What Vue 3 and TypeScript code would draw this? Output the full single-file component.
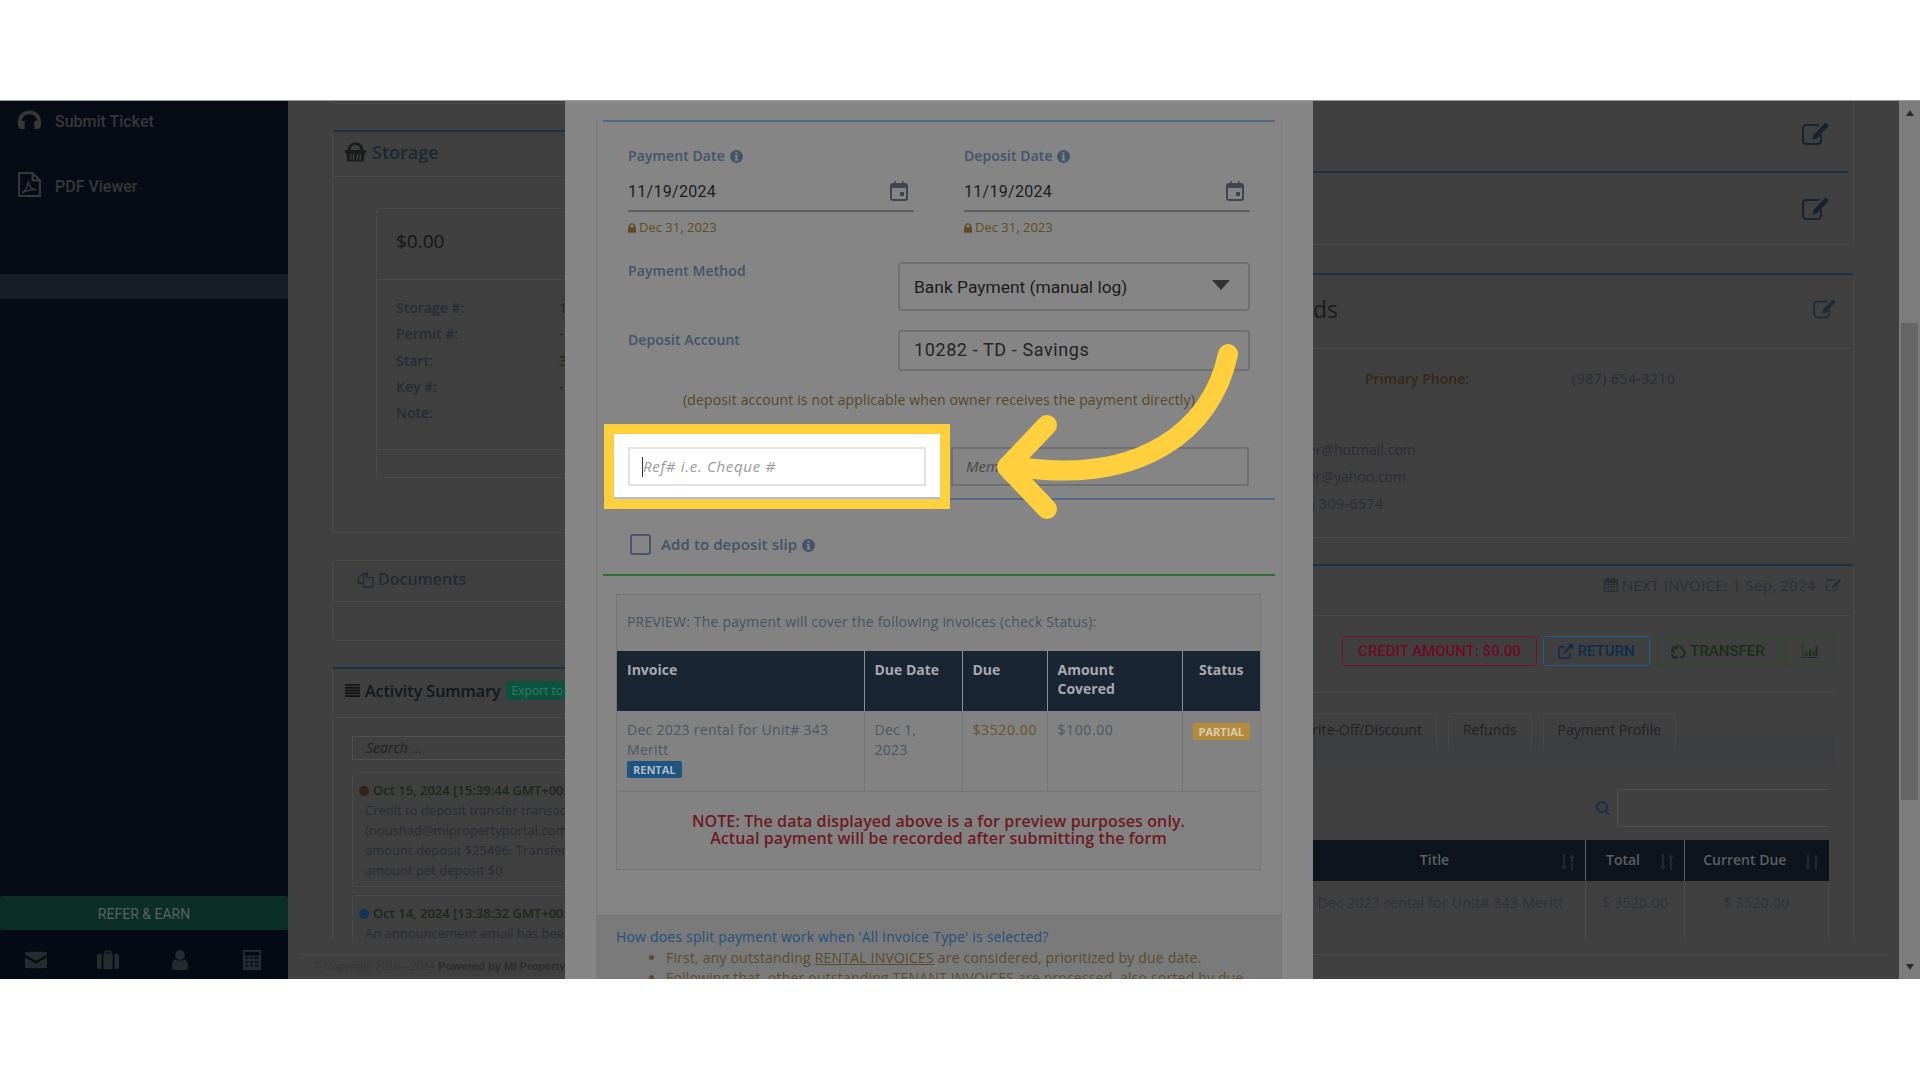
<script setup lang="ts">
interface StorageRow {
  label: string
  value: string
}

interface ActivityEntry {
  date: string
  dot: string
  lines: string[]
}

const storageRows: StorageRow[] = [
  { label: 'Storage #:', value: '1' },
  { label: 'Permit #:', value: '-' },
  { label: 'Start:', value: '3' },
  { label: 'Key #:', value: '-' },
  { label: 'Note:', value: '' },
]

const activity: ActivityEntry[] = [
  {
    date: 'Oct 15, 2024 [15:39:44 GMT+00:00]',
    dot: '#332513',
    lines: [
      'Credit to deposit transfer transaction by',
      '(noushad@mipropertyportal.com). Previous',
      'amount deposit $25496. Transfer amount',
      'amount pet deposit $0',
    ],
  },
  {
    date: 'Oct 14, 2024 [13:38:32 GMT+00:00]',
    dot: '#123458',
    lines: ['An announcement email has been sent to'],
  },
]

const footIcons = ['i-mail', 'i-bag', 'i-user', 'i-calc']
const tableCols = [
  { title: 'Title', cls: 'col-title' },
  { title: 'Total', cls: 'col-total' },
  { title: 'Current Due', cls: 'col-due' },
]
</script>

<template>
  <div class="page">
    <svg class="defs" width="0" height="0" aria-hidden="true">
      <symbol id="i-edit" viewBox="0 0 28 24">
        <path d="M19 13v5.500a3.500 3.500 0 0 1-3.500 3.500h-11A3.500 3.500 0 0 1 1 18.500v-12A3.500 3.500 0 0 1 4.500 3H17" fill="none" stroke="currentColor" stroke-width="2" />
        <path d="M23.500 0.500l3.500 3.200L15 16.500l-4.500 1.200 1-4.700z" fill="currentColor" />
      </symbol>
      <symbol id="i-info" viewBox="0 0 14 14">
        <path fill-rule="evenodd" d="M7 0a7 7 0 1 1 0 14A7 7 0 0 1 7 0zM5.800 2.300v2h2.400v-2zM5 5.500v1.300h.9v3.400H5v1.300h4v-1.300h-.9V5.500z" fill="currentColor" />
      </symbol>
      <symbol id="i-cal" viewBox="0 0 18 20">
        <path fill-rule="evenodd" d="M3 2h1.500V0H6v2h6V0h1.500v2H15a3 3 0 0 1 3 3v12a3 3 0 0 1-3 3H3a3 3 0 0 1-3-3V5a3 3 0 0 1 3-3zM2 7v10a1 1 0 0 0 1 1h12a1 1 0 0 0 1-1V7zm8 4h4v4h-4z" fill="currentColor" />
      </symbol>
      <symbol id="i-lock" viewBox="0 0 10 12">
        <path d="M1 5V3.500a4 3.500 0 0 1 8 0V5h1v7H0V5zm2 0h4V3.500a2 1.800 0 0 0-4 0z" fill="currentColor" fill-rule="evenodd" />
      </symbol>
      <symbol id="i-mail" viewBox="0 0 24 18">
        <path d="M2 0h20a2 2 0 0 1 2 2v1l-12 7L0 3V2a2 2 0 0 1 2-2zM0 6l12 7 12-7v10a2 2 0 0 1-2 2H2a2 2 0 0 1-2-2z" fill="currentColor" />
      </symbol>
      <symbol id="i-bag" viewBox="0 0 24 20">
        <path d="M8 3V1.500A1.500 1.500 0 0 1 9.500 0h5A1.500 1.500 0 0 1 16 1.500V3h1v17H7V3zm1.500 0h5V1.500h-5zM5 3.200V20H3a3 3 0 0 1-3-3V6a3 3 0 0 1 3-2.800zm14 0h2a3 3 0 0 1 3 2.800v11a3 3 0 0 1-3 3h-2z" fill="currentColor" fill-rule="evenodd" />
      </symbol>
      <symbol id="i-user" viewBox="0 0 16 20">
        <path d="M8 0a4.800 4.800 0 1 1 0 10A4.800 4.800 0 0 1 8 0zM3.500 9.500C5 11 11 11 12.500 9.500 15 10 16 12.500 16 15.500V17a3 3 0 0 1-3 3H3a3 3 0 0 1-3-3v-1.500C0 12.500 1 10 3.500 9.500z" fill="currentColor" />
      </symbol>
      <symbol id="i-calc" viewBox="0 0 20 22">
        <path fill-rule="evenodd" d="M1 0h18a1 1 0 0 1 1 1v20a1 1 0 0 1-1 1H1a1 1 0 0 1-1-1V1a1 1 0 0 1 1-1zm1 2v4h16V2zm1 6v2h3V8zm5 0v2h3V8zm5 0v2h4V8zM3 12v2h3v-2zm5 0v2h3v-2zm5 0v2h4v-2zM3 16v2h3v-2zm5 0v2h3v-2zm5 0v2h4v-2z" fill="currentColor" />
      </symbol>
      <symbol id="i-sort" viewBox="0 0 14 16">
        <path d="M3 16L0 12h2V0h2v12h2zM11 0l3 4h-2v12h-2V4H8z" fill="currentColor" />
      </symbol>
    </svg>

    <div class="frame">
      <aside class="sidebar">
        <div class="nav-item">
          <svg class="nav-icon" viewBox="0 0 24 20">
            <path d="M12 0C5.400 0 0 4.800 0 11v4c0 2 1.500 4.500 3.500 4.500H7V11H4c0-4 3.500-7 8-7s8 3 8 7h-3v8.500h3.500c2 0 3.500-2.500 3.500-4.500v-4C24 4.800 18.600 0 12 0z" fill="currentColor" />
          </svg>
          <span>Submit Ticket</span>
        </div>
        <div class="nav-item">
          <svg class="nav-icon pdf" viewBox="0 0 22 24">
            <path d="M1 1h13l7 7v15H1zM14 1v7h7" fill="none" stroke="currentColor" stroke-width="2" />
            <path d="M4 20c3-2 5-6 6-11 0 4 2 7 8 8-5-.5-9 .5-14 3z" fill="none" stroke="currentColor" stroke-width="1.400" />
          </svg>
          <span>PDF Viewer</span>
        </div>
        <div class="nav-active"></div>
        <div class="refer">REFER &amp; EARN</div>
        <div class="foot-icons">
          <svg v-for="icon in footIcons" :key="icon" :class="icon" class="foot-icon"><use :href="`#${icon}`" /></svg>
        </div>
      </aside>

      <main class="main">
        <div class="content">
          <div class="col">
            <div class="stub"></div>

            <section class="card card-storage">
              <header class="card-head">
                <svg class="title-icon" viewBox="0 0 22 20">
                  <path d="M5 8a6 6.500 0 0 1 12 0M3.500 8A7.500 7.500 0 0 1 18.500 8" fill="none" stroke="currentColor" stroke-width="1.600" />
                  <path d="M0 8h22v3h-1.200l-1.300 9H2.500l-1.300-9H0z" fill="currentColor" />
                  <path d="M6 12v6M9 12v6M13 12v6M16 12v6" stroke="#404040" stroke-width="1.400" />
                </svg>
                <h2 class="storage-title">Storage</h2>
              </header>
              <div class="storage-body">
                <div class="storage-inner">
                  <div class="storage-price">$0.00</div>
                  <dl class="storage-rows">
                    <div v-for="row in storageRows" :key="row.label" class="storage-row">
                      <dt>{{ row.label }}</dt>
                      <dd>{{ row.value }}</dd>
                    </div>
                  </dl>
                  <div class="storage-foot"></div>
                </div>
              </div>
            </section>

            <section class="card card-docs">
              <header class="card-head docs-head">
                <svg class="docs-icon" viewBox="0 0 18 20">
                  <path d="M1 11l5-6h5v4L7 9v6H1zM7 8l4-4h1M7 9h10v10H7z" fill="none" stroke="currentColor" stroke-width="1.400" />
                </svg>
                <h2 class="docs-title">Documents</h2>
              </header>
              <div class="docs-body"></div>
            </section>

            <section class="card card-activity">
              <header class="card-head">
                <svg class="list-icon" viewBox="0 0 16 14">
                  <path d="M0 0h16v2H0zM0 3h16v2H0zM0 6h16v2H0zM0 9h16v2H0zM0 12h16v2H0z" fill="currentColor" />
                </svg>
                <h2 class="activity-title">Activity Summary</h2>
                <span class="export">Export to PDF</span>
              </header>
              <div class="activity-body">
                <div class="search">Search ...</div>
                <article v-for="item in activity" :key="item.date" class="entry">
                  <div class="entry-date">
                    <span class="dot" :style="{ background: item.dot }"></span>{{ item.date }}
                  </div>
                  <p v-for="line in item.lines" :key="line">{{ line }}</p>
                </article>
              </div>
            </section>
          </div>

          <div class="col">
            <section class="card card-top">
              <div class="edit-row first"><svg class="edit"><use href="#i-edit" /></svg></div>
              <div class="edit-row"><svg class="edit"><use href="#i-edit" /></svg></div>
            </section>

            <section class="card card-contact">
              <header class="contact-head">
                <h2>Contact Records</h2>
                <svg class="edit-sm"><use href="#i-edit" /></svg>
              </header>
              <div class="contact-body">
                <div class="phone-row">
                  <strong>Primary Phone:</strong>
                  <span class="digits">(987) 654-3210</span>
                </div>
                <div class="contact-list">
                  <div>owner@hotmail.com</div>
                  <div>owner@yahoo.com</div>
                  <div class="digits">(987) 309-6574</div>
                </div>
              </div>
            </section>

            <section class="card card-ledger">
              <header class="ledger-head">
                <svg class="next-icon" viewBox="0 0 14 15">
                  <path d="M3 0h2v2h4V0h2v2h3v13H0V2h3zM1.500 6v7.500h11V6z" fill="currentColor" fill-rule="evenodd" />
                  <path d="M3 7.500h8M3 10h8M5 6v7M7.500 6v7M10 6v7" stroke="currentColor" />
                </svg>
                <span>NEXT INVOICE: 1 Sep, 2024</span>
                <svg class="next-edit"><use href="#i-edit" /></svg>
              </header>
              <div class="ledger-body">
                <div class="actions">
                  <div class="btn btn-credit">CREDIT AMOUNT: $0.00</div>
                  <div class="btn btn-return">
                    <svg class="btn-icon" viewBox="0 0 16 16">
                      <path d="M7 3H3a2 2 0 0 0-2 2v8a2 2 0 0 0 2 2h8a2 2 0 0 0 2-2V9" fill="none" stroke="currentColor" stroke-width="1.600" />
                      <path d="M10 0h6v6l-2.200-2.200L7 10.500 5.500 9l6.800-6.800z" fill="currentColor" />
                    </svg>
                    RETURN
                  </div>
                  <div class="btn btn-transfer">
                    <svg class="btn-icon" viewBox="0 0 16 16">
                      <path d="M8 1L5.500 5 3 3.500 1 7.500l3 1.700M10.500 2.500L13 7l2 3-2 3.500H9.500M1 11l2 3.500h4" fill="none" stroke="currentColor" stroke-width="2.200" />
                    </svg>
                    TRANSFER
                  </div>
                  <div class="btn btn-chart">
                    <svg class="chart-icon" viewBox="0 0 16 14">
                      <path d="M0 0h1v13h15v1H0zM3 8h2v4H3zM6.500 5h2v7h-2zM10 7h2v5h-2zM13 2h2v10h-2z" fill="currentColor" />
                    </svg>
                  </div>
                </div>
                <hr class="rule" />
                <nav class="tabs">
                  <span class="tab">Write-Off/Discount</span>
                  <span class="tab">Refunds</span>
                  <span class="tab">Payment Profile</span>
                </nav>
                <div class="filter">
                  <svg class="search-icon" viewBox="0 0 14 14">
                    <path d="M6 0a6 6 0 0 1 4.700 9.700L14 13l-1.500 1.200-3.200-3.300A6 6 0 1 1 6 0zm0 2a4 4 0 1 0 0 8 4 4 0 0 0 0-8z" fill="currentColor" fill-rule="evenodd" />
                  </svg>
                  <div class="filter-input"></div>
                </div>
                <table class="ledger-table">
                  <thead>
                    <tr>
                      <th v-for="col in tableCols" :key="col.title" :class="col.cls">
                        {{ col.title }}
                        <svg class="sort"><use href="#i-sort" /></svg>
                      </th>
                    </tr>
                  </thead>
                  <tbody>
                    <tr>
                      <td class="cell-title">Dec 2023 rental for Unit# 343 Meritt</td>
                      <td>$ 3520.00</td>
                      <td>$ 3520.00</td>
                    </tr>
                  </tbody>
                </table>
              </div>
            </section>
          </div>
        </div>

        <footer class="copyright">
          © Copyright 2016 - 2024 <b>Powered by MI Property Portal</b>
        </footer>
      </main>

      <div class="scrollbar">
        <div class="sb-btn"><i class="tri-up"></i></div>
        <div class="sb-thumb"></div>
        <div class="sb-btn sb-down"><i class="tri-down"></i></div>
      </div>

      <!-- payment modal -->
      <div class="modal">
        <div class="panel">
          <div class="line-blue top-line"></div>
          <div class="form">
            <div class="dates">
              <div v-for="label in ['Payment Date', 'Deposit Date']" :key="label" class="date-field">
                <label class="label">{{ label }} <svg class="info"><use href="#i-info" /></svg></label>
                <div class="date-input">
                  <span>11/19/2024</span>
                  <svg class="cal"><use href="#i-cal" /></svg>
                </div>
                <div class="hint"><svg class="lock"><use href="#i-lock" /></svg>Dec 31, 2023</div>
              </div>
            </div>

            <div class="pair pair-method">
              <label class="label">Payment Method</label>
              <div class="select">
                <span>Bank Payment (manual log)</span>
                <i class="caret"></i>
              </div>
            </div>
            <div class="pair pair-account">
              <label class="label">Deposit Account</label>
              <div class="account">10282 - TD - Savings</div>
            </div>
            <p class="form-note">(deposit account is not applicable when owner receives the payment directly)</p>

            <div class="refs">
              <div class="spot"></div>
              <div class="ref-input"><i class="text-caret"></i>Ref# i.e. Cheque #</div>
              <div class="memo-input">Memo</div>
            </div>
          </div>
          <div class="line-blue"></div>
          <div class="slip">
            <span class="check"></span>
            <span class="label slip-label">Add to deposit slip <svg class="info"><use href="#i-info" /></svg></span>
          </div>
          <div class="line-green"></div>

          <div class="preview">
            <p class="preview-text">PREVIEW: The payment will cover the following invoices (check Status):</p>
            <table class="preview-table">
              <thead>
                <tr>
                  <th class="p-invoice">Invoice</th>
                  <th class="p-date">Due Date</th>
                  <th class="p-due">Due</th>
                  <th class="p-amount">Amount Covered</th>
                  <th class="p-status">Status</th>
                </tr>
              </thead>
              <tbody>
                <tr>
                  <td>
                    Dec 2023 rental for Unit# 343 Meritt
                    <div><span class="pill pill-rental">RENTAL</span></div>
                  </td>
                  <td class="date-cell">Dec 1, 2023</td>
                  <td class="money">$3520.00</td>
                  <td class="money-plain">$100.00</td>
                  <td class="status-cell"><span class="pill pill-partial">PARTIAL</span></td>
                </tr>
              </tbody>
            </table>
            <p class="preview-note">
              NOTE: The data displayed above is a for preview purposes only.<br />
              Actual payment will be recorded after submitting the form
            </p>
          </div>

          <div class="help">
            <a class="help-q">How does split payment work when 'All Invoice Type' is selected?</a>
            <ul>
              <li>First, any outstanding <u>RENTAL INVOICES</u> are considered, prioritized by due date.</li>
              <li>Following that, other outstanding TENANT INVOICES are processed, also sorted by due date.</li>
            </ul>
          </div>
        </div>
      </div>

      <!-- tutorial arrow -->
      <svg class="arrow" viewBox="0 100 1920 879">
        <g fill="none" stroke="#ffd03e" stroke-width="20" stroke-linecap="round" stroke-linejoin="round">
          <path d="M1228 353C1212 430 1140 484 1018 466" />
          <path d="M1047 424L1007 466L1047 508" />
        </g>
      </svg>
    </div>
  </div>
</template>

<style>
html,
body {
  margin: 0;
  background: #fff;
}
</style>

<style scoped>
* {
  box-sizing: border-box;
}

.page {
  width: 1920px;
  height: 1080px;
  padding-top: 100px;
  background: #fff;
  font-family: "Open Sans", "Liberation Sans", sans-serif;
  font-size: 14px;
  overflow: hidden;
}

.defs {
  position: absolute;
}

.frame {
  position: relative;
  display: flex;
  width: 1920px;
  height: 879px;
  overflow: hidden;
  background: #404040;
  border-top: 1px solid #9a9a9a;
}

/* sidebar */
.sidebar {
  display: flex;
  flex-direction: column;
  flex: 0 0 288px;
  height: 100%;
  background: #070b16;
  color: #38383a;
  font-family: Roboto, sans-serif;
}

.nav-item {
  display: flex;
  align-items: center;
  height: 65px;
  padding-left: 18px;
  font-size: 16px;
  font-weight: 500;
}

.nav-item:first-child {
  margin-top: -12px;
}

.nav-icon {
  width: 23px;
  height: 22px;
  margin: 0 14px 4px 0;
}

.nav-icon.pdf {
  height: 25px;
  margin-bottom: 5px;
}

.nav-active {
  height: 25px;
  margin-top: 55px;
  background: #191d25;
}

.refer {
  margin-top: auto;
  height: 34px;
  line-height: 36px;
  text-align: center;
  border-radius: 3px;
  background: #0b2e27;
  color: #56645f;
  font-size: 14px;
}

.foot-icons {
  display: grid;
  grid-template-columns: repeat(4, 1fr);
  justify-items: center;
  height: 49px;
  padding-top: 20px;
  color: #262b31;
  background: #060a14;
}

.foot-icon {
  width: 22px;
  height: 20px;
}

/* page content */
.main {
  display: flex;
  flex-direction: column;
  flex: 0 0 1611px;
  height: 100%;
}

.content {
  display: grid;
  grid-template-columns: 540px 1fr;
  gap: 20px;
  height: 839px;
  padding: 0 45px 0 44px;
  overflow: hidden;
}

.col {
  display: flex;
  flex-direction: column;
  align-items: stretch;
  min-width: 0;
}

.stub {
  height: 3px;
  border: 1px solid #4a4a4a;
  border-top: 0;
  border-radius: 0 0 3px 3px;
}

.card {
  border: 1px solid #4a4a4a;
  border-top: 2px solid #1b3146;
  border-radius: 4px;
}

.card-head {
  display: flex;
  align-items: center;
  height: 45px;
  padding: 0 0 5px 12px;
  border-bottom: 1px solid #4a4a4a;
}

.card-head h2 {
  margin: 0;
  font-weight: 600;
}

.card-storage {
  margin-top: 26px;
  height: 403px;
}

.title-icon {
  width: 21px;
  height: 20px;
  margin-right: 6px;
  color: #1a1b1b;
}

.storage-title {
  font-size: 18px;
  color: #1f2730;
}

.storage-body {
  padding: 31px 0 0 43px;
}

.storage-inner {
  width: 440px;
  height: 270px;
  border: 1px solid #4a4a4a;
  border-radius: 3px;
}

.storage-price {
  height: 71px;
  padding: 19px 0 0 19px;
  font-size: 19px;
  font-weight: 500;
  line-height: 26px;
  color: #161616;
  border-bottom: 1px solid #4b4b4b;
}

.storage-rows {
  height: 170px;
  margin: 0;
  padding: 15px 0 0 19px;
  border-bottom: 1px solid #4b4b4b;
}

.storage-row {
  display: flex;
  height: 26.300px;
  line-height: 26px;
  font-size: 14px;
}

.storage-row dt {
  flex: 0 0 163px;
  font-weight: 600;
  color: #252c36;
}

.storage-row dd {
  margin: 0;
  color: #262618;
}

.card-docs {
  margin-top: 27px;
  height: 81px;
  border-top: 1px solid #4a4a4a;
}

.docs-head {
  height: 41px;
  padding-left: 24px;
}

.docs-icon {
  width: 17px;
  height: 19px;
  margin-right: 4px;
  color: #222a34;
}

.docs-title {
  font-size: 16px;
  color: #222a34;
}

.card-activity {
  margin-top: 26px;
  height: 400px;
}

.list-icon {
  width: 15px;
  height: 13px;
  margin-right: 5px;
  color: #121518;
}

.activity-title {
  font-size: 16px;
  color: #12171c;
}

.export {
  margin: 0 0 0 5px;
  width: 110px;
  padding: 1px 6px;
  line-height: 17px;
  font-size: 12px;
  white-space: nowrap;
  border-radius: 2px;
  background: #0b5240;
  color: #357a68;
}

.card-activity .card-head {
  height: 49px;
}

.activity-body {
  padding: 18px 0 0 19px;
}

.search {
  width: 420px;
  height: 24px;
  padding-left: 13px;
  border: 1px solid #505050;
  font-size: 14px;
  font-style: italic;
  line-height: 22px;
  color: #222;
}

.entry {
  width: 420px;
  margin-top: 12px;
  padding: 7px 0 6px 12px;
  border: 1px solid #4a4a4a;
  border-radius: 3px;
  font-size: 13px;
  line-height: 20px;
  color: #272c34;
  white-space: nowrap;
}

.entry + .entry {
  margin-top: 8px;
}

.entry-date {
  margin-left: -6px;
  font-weight: 600;
  color: #1c2819;
}

.entry p {
  margin: 0;
}

.dot {
  display: inline-block;
  width: 10px;
  height: 10px;
  margin-right: 4px;
  border-radius: 50%;
  vertical-align: -1px;
}

/* right column */
.card-top {
  height: 144px;
  border-top: 0;
  border-radius: 0 0 4px 4px;
}

.edit-row {
  display: flex;
  justify-content: flex-end;
  align-items: center;
  height: 72px;
  padding-right: 23px;
}

.edit-row.first {
  padding-bottom: 4px;
  margin-right: 5px;
  padding-right: 18px;
  border-bottom: 2px solid #1e3044;
}

.edit {
  width: 28px;
  height: 24px;
  color: #162330;
}

.card-contact {
  margin-top: 28px;
  height: 265px;
}

.contact-head {
  position: relative;
  display: flex;
  align-items: center;
  height: 74px;
  padding: 0 16px 5px 0;
  border-bottom: 1px solid #4a4a4a;
}

.contact-head h2 {
  margin: 0;
  width: 445px;
  text-align: right;
  font-size: 23px;
  font-weight: 400;
  color: #1a1a1a;
  white-space: nowrap;
}

.edit-sm {
  width: 24px;
  height: 20px;
  margin-left: auto;
  color: #1d2a36;
}

.contact-body {
  padding: 19px 0 0 387px;
  font-size: 14px;
  line-height: 22px;
  color: #282d35;
}

.digits {
  letter-spacing: 0.500px;
}

.phone-row {
  display: grid;
  grid-template-columns: 207px 1fr;
  margin-left: 85px;
}

.phone-row strong {
  color: #352817;
  font-weight: 600;
}

.contact-list {
  margin-top: 49px;
  white-space: nowrap;
}

.contact-list div {
  height: 27px;
}

.card-ledger {
  margin-top: 26px;
  height: 500px;
}

.ledger-head {
  display: flex;
  justify-content: flex-end;
  align-items: center;
  height: 50px;
  padding: 0 11px 12px 0;
  border-bottom: 1px solid #4a4a4a;
  font-size: 15px;
  letter-spacing: 0.300px;
  color: #282f37;
  white-space: nowrap;
}

.next-icon {
  width: 14px;
  height: 15px;
  margin-right: 4px;
}

.next-edit {
  width: 16px;
  height: 14px;
  margin-left: 10px;
}

.ledger-body {
  padding: 20px 18px 0 0;
}

.actions {
  display: flex;
  justify-content: flex-end;
  gap: 6px;
}

.btn {
  display: flex;
  align-items: center;
  justify-content: center;
  height: 30px;
  border: 1px solid;
  border-radius: 3px;
  font-family: Roboto, sans-serif;
  font-size: 15px;
  font-weight: 500;
  white-space: nowrap;
}

.btn-credit {
  width: 195px;
  color: #6e0a28;
  border-color: #7a0c2c;
}

.btn-return {
  width: 107px;
  color: #0d2d4d;
  border-color: #1f5c94;
}

.btn-transfer {
  width: 124px;
  color: #1c2e17;
  border-color: #2c4a20;
}

.btn-chart {
  width: 49px;
  color: #1f3018;
  border-color: #2c4a20;
}

.btn-icon {
  width: 15px;
  height: 15px;
  margin-right: 4px;
}

.chart-icon {
  width: 17px;
  height: 14px;
}

.rule {
  height: 0;
  margin: 26px 0 0;
  border: 0;
  border-top: 1px solid #4b4b4b;
}

.tabs {
  display: flex;
  justify-content: flex-end;
  gap: 11px;
  height: 51px;
  margin-top: 20px;
  padding-right: 159px;
  background: linear-gradient(transparent 22px, #3c3e40 22px);
}

.tab {
  height: 36px;
  padding: 0 14px;
  line-height: 32px;
  border: 1px solid #474747;
  border-bottom: 0;
  border-radius: 3px 3px 0 0;
  font-size: 14px;
  color: #1f2225;
}

.filter {
  display: flex;
  justify-content: flex-end;
  align-items: center;
  margin-top: 25px;
  padding-right: 6px;
}

.search-icon {
  width: 14px;
  height: 14px;
  margin-right: 7px;
  color: #163047;
}

.filter-input {
  width: 212px;
  height: 38px;
  border: 1px solid #4f4f4f;
  border-right: 0;
}

.ledger-table {
  width: 545px;
  margin: 13px 6px 0 auto;
  border-collapse: collapse;
  table-layout: fixed;
  font-size: 14px;
  letter-spacing: 0.280px;
  color: #2c323a;
}

.ledger-table th {
  position: relative;
  height: 41px;
  padding: 0 0 2px;
  background: #0d141d;
  border-left: 1px solid #5a5f64;
  font-weight: 600;
  letter-spacing: 0;
  color: #5c5f64;
}

.col-title {
  width: 302px;
}

.col-total {
  width: 99px;
  padding-right: 24px !important;
}

.col-due {
  width: 144px;
  padding-right: 24px !important;
}

.sort {
  position: absolute;
  right: 10px;
  top: 14px;
  width: 14px;
  height: 16px;
  color: #24292e;
}

.ledger-table td {
  height: 70px;
  padding-top: 12px;
  vertical-align: top;
  text-align: center;
  border-left: 1px solid #4b4b4b;
  border-right: 1px solid #4b4b4b;
  white-space: nowrap;
}

.ledger-table td.cell-title {
  padding-left: 34px;
  text-align: left;
  border-left: 0;
}

.copyright {
  margin: 14px 9px 0 12px;
  padding: 1px 0 0 13px;
  border-top: 1px solid #4c4c4c;
  font-family: "Liberation Sans", sans-serif;
  font-size: 11.200px;
  line-height: 20px;
  color: #353535;
  white-space: nowrap;
}

.copyright b {
  color: #2c2c2c;
}

/* scrollbar */
.scrollbar {
  display: flex;
  flex-direction: column;
  flex: 0 0 21px;
  height: 100%;
  background: #7c7c7c;
}

.sb-btn {
  display: flex;
  align-items: center;
  justify-content: center;
  height: 24px;
}

.sb-thumb {
  width: 17px;
  height: 477px;
  margin: 198px 0 0 2px;
  background: #666;
}

.sb-down {
  margin-top: auto;
}

.tri-up,
.tri-down {
  width: 0;
  height: 0;
  border-left: 4.500px solid transparent;
  border-right: 4.500px solid transparent;
}

.tri-up {
  border-bottom: 6px solid #2a2a2a;
}

.tri-down {
  border-top: 6px solid #2a2a2a;
}

/* modal */
.modal {
  position: absolute;
  top: 0;
  left: 565px;
  width: 748px;
  height: 100%;
  padding: 0 31px;
  overflow: hidden;
  background: #868686;
}

.panel {
  height: 100%;
  background: #858585;
  border-left: 1px solid #787878;
  border-right: 1px solid #787878;
}

.line-blue {
  height: 2px;
  margin: 0 6px;
  background: #4e6a85;
}

.top-line {
  margin-top: 19px;
}

.form {
  padding: 0 31px;
}

.dates {
  display: grid;
  grid-template-columns: 286px 286px;
  gap: 50px;
  padding-top: 24px;
}

.label {
  display: block;
  line-height: 20px;
  font-weight: 600;
  font-size: 14px;
  letter-spacing: 0.100px;
  color: #43536a;
}

.info {
  display: inline-block;
  width: 13px;
  height: 13px;
  margin-left: 1px;
  vertical-align: -2px;
  color: #43536a;
}

.date-input {
  display: flex;
  justify-content: space-between;
  align-items: center;
  height: 42px;
  margin-top: 4px;
  padding: 1px 6px 0 0;
  border-bottom: 2px solid #5f5f5f;
  font-family: Roboto, sans-serif;
  font-size: 16px;
  letter-spacing: 0.300px;
  color: #1d1d1d;
}

.date-input span {
  margin-top: 1px;
}

.cal {
  width: 18px;
  height: 20px;
  color: #3c4650;
}

.hint {
  margin-top: 7px;
  line-height: 16px;
  font-size: 13px;
  color: #624b24;
}

.lock {
  width: 8px;
  height: 10px;
  margin-right: 3px;
  vertical-align: -1px;
}

.pair {
  display: grid;
  grid-template-columns: 270px 352px;
}

.pair-method {
  margin-top: 27px;
}

.pair-method .label {
  margin-top: -1px;
}

.pair-account {
  margin-top: 19px;
}

.select {
  display: flex;
  justify-content: space-between;
  align-items: center;
  height: 49px;
  padding: 0 18px 0 14px;
  border: 2px solid #707070;
  border-radius: 4px;
  font-family: Roboto, sans-serif;
  font-size: 17.400px;
  color: #1c1c1c;
}

.caret {
  width: 0;
  height: 0;
  border-left: 9.500px solid transparent;
  border-right: 9.500px solid transparent;
  border-top: 10px solid #333;
  margin-top: -3px;
}

.account {
  height: 41px;
  padding: 0 14px;
  border: 2px solid #707070;
  border-radius: 3px;
  line-height: 35px;
  font-family: Roboto, sans-serif;
  font-size: 18px;
  letter-spacing: 0.600px;
  color: #242424;
}

.form-note {
  margin: 19px 0 0;
  line-height: 20px;
  text-align: center;
  font-size: 14px;
  letter-spacing: 0.140px;
  color: #574527;
  white-space: nowrap;
}

.refs {
  position: relative;
  display: grid;
  grid-template-columns: 298px 298px;
  gap: 25px;
  margin-top: 37px;
  height: 39px;
  margin-bottom: 12px;
}

.spot {
  position: absolute;
  left: -24px;
  top: -23px;
  width: 346px;
  height: 85px;
  border: 10px solid #ffd03e;
  background: #fff;
  box-shadow: inset 0 -2px 0 #a4c0dc;
}

.ref-input {
  position: relative;
  height: 39px;
  padding-left: 13px;
  border: 2px solid #e3e3e3;
  background: #fff;
  font-style: italic;
  font-size: 15px;
  line-height: 35px;
  color: #9a9a9a;
  letter-spacing: 0.700px;
}

.text-caret {
  position: absolute;
  left: 12px;
  top: 8px;
  width: 1px;
  height: 20px;
  background: #333;
}

.memo-input {
  height: 39px;
  padding-left: 13px;
  border: 2px solid #707070;
  font-style: italic;
  font-size: 15px;
  line-height: 35px;
  color: #4a4a4a;
}

.slip {
  display: flex;
  align-items: center;
  gap: 10px;
  height: 21px;
  margin: 34px 0 0 33px;
}

.slip-label {
  margin-top: -2px;
  font-size: 15px;
}

.check {
  width: 21px;
  height: 21px;
  border: 2px solid #47576a;
  border-radius: 3px;
}

.line-green {
  height: 2px;
  margin: 19px 6px 0;
  background: #2f6b34;
}

.preview {
  height: 276px;
  margin: 18px 20px 0 19px;
  border: 1px solid #757575;
  background: #828282;
}

.preview-text {
  margin: 0;
  padding: 17px 0 0 10px;
  line-height: 20px;
  font-size: 14px;
  letter-spacing: 0.190px;
  color: #475464;
}

.preview-table {
  width: 100%;
  margin-top: 19px;
  border-collapse: collapse;
  table-layout: fixed;
  font-size: 14px;
  color: #4c5662;
}

.preview-table th {
  height: 60px;
  padding: 9px 10px 0;
  vertical-align: top;
  text-align: left;
  line-height: 19px;
  font-size: 14px;
  font-weight: 700;
  background: #1a2534;
  color: #a8aaad;
  border-left: 1px solid #8a9098;
}

.preview-table th:first-child {
  border-left: 0;
}

.p-invoice {
  width: 247px;
}

.p-date {
  width: 98px;
}

.p-due {
  width: 85px;
}

.p-amount {
  width: 135px;
}

.preview-table .p-status {
  text-align: center;
}

.preview-table td {
  height: 80px;
  padding: 9px 10px 0;
  vertical-align: top;
  line-height: 20px;
  letter-spacing: 0.300px;
  border-left: 1px solid #757575;
  border-bottom: 1px solid #757575;
}

.preview-table td:first-child {
  border-left: 0;
}

.preview-table td.date-cell {
  padding-right: 30px;
}

.preview-table td.money,
.preview-table td.money-plain {
  letter-spacing: 0.600px;
}

.money {
  color: #6a532a;
}

.status-cell {
  text-align: center;
}

.pill {
  display: inline-block;
  height: 17px;
  padding: 0 6px;
  border-radius: 2px;
  font-size: 11px;
  font-weight: 700;
  line-height: 17px;
  letter-spacing: 0;
  vertical-align: top;
}

.pill-rental {
  margin-top: 1px;
  background: #1d5480;
  color: #b0bcc8;
}

.pill-partial {
  margin-top: 3px;
  background: #b48a3c;
  color: #d8ccb0;
}

.preview-note {
  margin: 0;
  padding-top: 21px;
  text-align: center;
  font-size: 16px;
  font-weight: 600;
  line-height: 17px;
  letter-spacing: 0.100px;
  color: #6e1a22;
}

.help {
  height: 200px;
  margin-top: 45px;
  padding: 11px 0 0 19px;
  border-top: 1px solid #757575;
  background: #7a7a7a;
  line-height: 20px;
  font-size: 14px;
  letter-spacing: 0.190px;
  color: #5c4b2c;
}

.help-q {
  color: #24507c;
}

.help ul {
  margin: 1px 0 0;
  padding: 0 22px 0 50px;
}

.help li {
  line-height: 19.500px;
}

.arrow {
  position: absolute;
  left: 0;
  top: 0;
  width: 1920px;
  height: 879px;
  pointer-events: none;
}
</style>
